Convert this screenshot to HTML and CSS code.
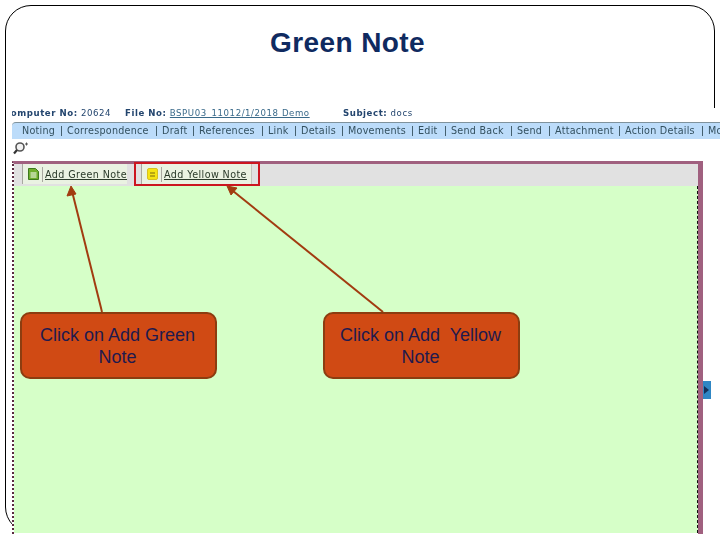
FILE: index.html
```html
<!DOCTYPE html>
<html lang="en">
<head>
<meta charset="utf-8">
<title>Green Note</title>
<link rel="stylesheet" href="styles.css">
</head>
<body>
<main class="slide">
  <div class="frame"></div>
  <h1 class="title">Green Note</h1>
  <section class="shot">
    <div class="info">
      <span class="info-computer"><b>Computer No:</b> 20624</span>
      <span class="info-file"><b>File No:</b> <u>BSPU03_11012/1/2018 Demo</u></span>
      <span class="info-subject"><b>Subject:</b> docs</span>
    </div>
    <nav class="menu">
      <span class="m-noting">Noting</span>
      <span class="m-corr">Correspondence</span>
      <span class="m-draft">Draft</span>
      <span class="m-ref">References</span>
      <span class="m-link">Link</span>
      <span class="m-det">Details</span>
      <span class="m-mov">Movements</span>
      <span class="m-edit">Edit</span>
      <span class="m-back">Send Back</span>
      <span class="m-send">Send</span>
      <span class="m-att">Attachment</span>
      <span class="m-act">Action Details</span>
      <span class="m-more">More</span>
    </nav>
    <div class="search">
      <svg width="16" height="14" viewBox="0 0 16 14" aria-hidden="true">
        <circle cx="7" cy="6" r="4" fill="#f2f2f2" stroke="#555" stroke-width="1.6"/>
        <path d="M4 9 L1 12.5" stroke="#333" stroke-width="2.2" fill="none"/>
        <path d="M12 3 h3 M13.5 1.5 v3" stroke="#555" stroke-width="1" fill="none"/>
      </svg>
    </div>
    <div class="panel">
      <div class="toolbar">
        <div class="tool tool-green">
          <svg class="note" width="11" height="12" viewBox="0 0 11 12" aria-hidden="true">
            <path d="M0.5 0.5 H7.5 L10.5 3.5 V11.5 H0.5 Z" fill="#6fae2e" stroke="#3e7a1e"/>
            <path d="M2.5 5 H8.5 M2.5 7 H8.5 M2.5 9 H8.5" stroke="#fff" stroke-width="1"/>
          </svg>
          <a class="tool-link">Add Green Note</a>
        </div>
        <div class="tool tool-yellow">
          <svg class="note" width="11" height="12" viewBox="0 0 11 12" aria-hidden="true">
            <rect x="0.5" y="0.5" width="10" height="11" rx="1.5" fill="#f5e414" stroke="#d8c020"/>
            <path d="M3 5 H8 M3 8 H8" stroke="#7a6a10" stroke-width="1"/>
          </svg>
          <a class="tool-link">Add Yellow Note</a>
        </div>
      </div>
      <div class="notes"></div>
    </div>
    <div class="side-tab"><span class="side-arrow"></span></div>
  </section>
  <div class="highlight"></div>
  <svg class="arrows" width="720" height="540" viewBox="0 0 720 540" aria-hidden="true">
    <path d="M102 312 L72.5 193" stroke="#a23c10" stroke-width="2" fill="none"/>
    <path d="M71 186 L67 196 L76 194 Z" fill="#a23c10" stroke="#a23c10"/>
    <path d="M383 312 L233 191" stroke="#a23c10" stroke-width="2" fill="none"/>
    <path d="M227 186 L231 195 L237 188 Z" fill="#a23c10" stroke="#a23c10"/>
  </svg>
  <div class="callout callout-green">Click on Add Green Note</div>
  <div class="callout callout-yellow">Click on Add&nbsp; Yellow Note</div>
</main>
</body>
</html>
```

FILE: styles.css
```css
html, body {
  margin: 0;
  padding: 0;
  background: #fff;
}
.slide {
  position: relative;
  width: 720px;
  height: 540px;
  overflow: hidden;
  font-family: "Liberation Sans", Arial, sans-serif;
}
.frame {
  position: absolute;
  left: 5px;
  top: 5px;
  width: 708px;
  height: 526px;
  border: 1px solid #000;
  border-radius: 26px;
}
.title {
  position: relative;
  margin: 0;
  height: 108px;
  box-sizing: border-box;
  padding: 28px 25px 0 0;
  text-align: center;
  font-size: 28px;
  letter-spacing: 0.4px;
  line-height: 30px;
  font-weight: 700;
  color: #0f2a60;
}
.shot {
  position: relative;
  margin-left: 12px;
  height: 426px;
  background: #fff;
  font-family: "DejaVu Sans", sans-serif;
}
.info {
  position: relative;
  height: 14px;
  overflow: hidden;
  font-size: 8.6px;
  letter-spacing: 0.55px;
  line-height: 11px;
  color: #23456e;
  filter: blur(0.45px);
}
.info span {
  position: absolute;
  top: 0;
  white-space: nowrap;
}
.info-computer { left: -8px; }
.info-file { left: 113px; }
.info-subject { left: 331px; }
.info u { color: #3a6a8a; font-weight: 400; }
.menu {
  display: block;
  position: relative;
  height: 16px;
  border-top: 1px solid #7f929c;
  border-top-left-radius: 4px;
  background: #bcdcfa;
  font-size: 9.6px;
  letter-spacing: 0.25px;
  line-height: 16px;
  color: #33505f;
  white-space: nowrap;
  filter: blur(0.45px);
}
.menu span {
  position: absolute;
  top: 0;
}
.menu span + span::before {
  content: "";
  position: absolute;
  left: -6px;
  top: 3px;
  width: 1px;
  height: 10px;
  background: #44606f;
}
.m-noting { left: 10px; }
.m-corr { left: 55px; }
.m-draft { left: 150px; }
.m-ref { left: 187px; }
.m-link { left: 256px; }
.m-det { left: 289px; }
.m-mov { left: 336px; }
.m-edit { left: 406px; }
.m-back { left: 439px; }
.m-send { left: 505px; }
.m-att { left: 543px; }
.m-act { left: 613px; }
.m-more { left: 696px; }
.search {
  height: 22px;
  padding-left: 1px;
  box-sizing: border-box;
  padding-top: 2px;
}
.search svg { display: block; }
.panel {
  position: relative;
  width: 691px;
  height: 373px;
  box-sizing: border-box;
  border-top: 3px solid #a0607f;
  border-right: 5px solid #a0607f;
  border-left: 2px dotted #5a2a40;
  display: flex;
  flex-direction: column;
}
.toolbar {
  display: flex;
  height: 22px;
  flex: none;
  background: #e1e1e1;
  padding-left: 8px;
  gap: 14px;
}
.tool {
  display: flex;
  align-items: center;
  height: 20px;
  background: #eaf2e2;
  border-left: 1px solid #a8a8a0;
  border-right: 1px solid #c4c4bc;
  padding-left: 5px;
  box-sizing: border-box;
}
.tool-green { width: 105px; border-right: 0; }
.tool-yellow { width: 111px; }
.note {
  flex: none;
  margin-right: 3px;
}
.tool-link {
  border-left: 1px solid #a8a8a0;
  padding-left: 2px;
  font-size: 9.6px;
  letter-spacing: 0.4px;
  line-height: 15px;
  color: #2a3a2a;
  text-decoration: underline;
  white-space: nowrap;
  filter: blur(0.4px);
}
.notes {
  flex: 1;
  background: #d6ffc8;
  border-right: 1px dashed #111;
  margin-bottom: 1px;
}
.side-tab {
  position: absolute;
  left: 691px;
  top: 273px;
  width: 8px;
  height: 18px;
  background: #2f86c4;
  display: flex;
  align-items: center;
}
.side-arrow {
  width: 0;
  height: 0;
  border-left: 5px solid #12305a;
  border-top: 4px solid transparent;
  border-bottom: 4px solid transparent;
  margin-left: 1px;
}
.highlight {
  position: absolute;
  left: 134px;
  top: 162px;
  width: 122px;
  height: 20px;
  border: 2px solid #cc1520;
}
.arrows {
  position: absolute;
  left: 0;
  top: 0;
}
.callout {
  position: absolute;
  top: 312px;
  width: 197px;
  height: 67px;
  box-sizing: border-box;
  padding: 10px 13px 0 11px;
  background: #d04a14;
  border: 2px solid #8c3d10;
  border-radius: 10px;
  text-align: center;
  font-size: 18px;
  line-height: 22px;
  color: #1f1a4e;
}
.callout-green { left: 20px; }
.callout-yellow { left: 323px; }
```
